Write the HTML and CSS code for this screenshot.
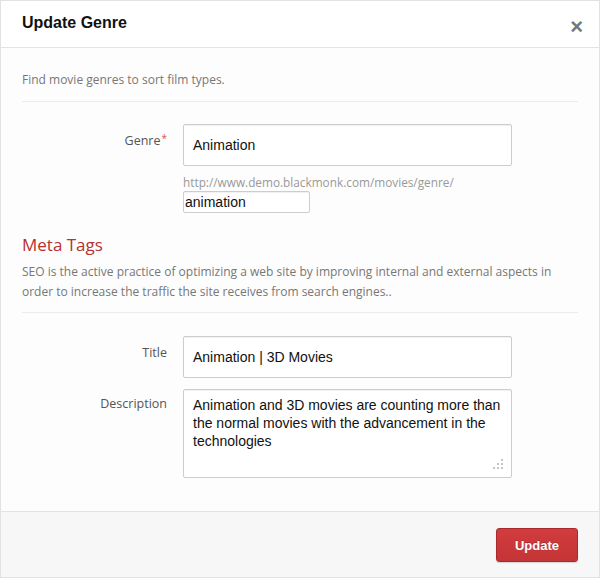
FILE: index.html
```html
<!DOCTYPE html>
<html>
<head>
<meta charset="utf-8">
<link rel="stylesheet" href="styles.css">
</head>
<body>
<div class="modal">
  <div class="modal-header">
    <h3 class="modal-title">Update Genre</h3>
    <span class="close">&times;</span>
  </div>
  <div class="modal-body">
    <p class="intro">Find movie genres to sort film types.</p>
    <hr class="rule">
    <div class="row">
      <label class="label">Genre<span class="req">*</span></label>
      <div class="field">
        <div class="input big">Animation</div>
        <div class="help">http://www.demo.blackmonk.com/movies/genre/</div>
        <div class="input slug">animation</div>
      </div>
    </div>
    <h4 class="section">Meta Tags</h4>
    <p class="seo">SEO is the active practice of optimizing a web site by improving internal and external aspects in order to increase the traffic the site receives from search engines..</p>
    <hr class="rule rule-2">
    <div class="row row-title">
      <label class="label">Title</label>
      <div class="field"><div class="input big">Animation | 3D Movies</div></div>
    </div>
    <div class="row row-desc">
      <label class="label">Description</label>
      <div class="field">
        <div class="input area">Animation and 3D movies are counting more than the normal movies with the advancement in the technologies
          <svg class="grip" width="12" height="12" viewBox="0 0 12 12"><g fill="#c4c4c4"><rect x="9" y="1" width="2" height="2"/><rect x="5" y="5" width="2" height="2"/><rect x="9" y="5" width="2" height="2"/><rect x="1" y="9" width="2" height="2"/><rect x="5" y="9" width="2" height="2"/><rect x="9" y="9" width="2" height="2"/></g></svg>
        </div>
      </div>
    </div>
  </div>
  <div class="modal-footer">
    <button class="btn">Update</button>
  </div>
</div>
</body>
</html>
```
FILE: styles.css
```css
html, body { margin: 0; padding: 0; background: #fff; }
.modal {
  width: 600px; height: 578px; box-sizing: border-box;
  border: 1px solid #e2e2e2;
  display: flex; flex-direction: column;
  font-family: "Open Sans", "Noto Sans", sans-serif;
}
.modal-header {
  height: 46px; border-bottom: 1px solid #e3e3e3;
  display: flex; align-items: center; justify-content: space-between;
  padding: 0 16px 0 21px; background: #fff;
}
.modal-title {
  margin: 0; font-family: "Liberation Sans", Arial, sans-serif;
  font-weight: bold; font-size: 16px; color: #111; position: relative; top: -1px;
}
.close {
  font-family: "Liberation Sans", Arial, sans-serif; font-weight: bold;
  font-size: 22px; color: #777; line-height: 1; position: relative; top: 3px;
}
.modal-body {
  flex: 1; background: #fdfdfd; padding: 23px 21px 0 21px;
}
.intro { margin: 0; font-size: 12px; color: #777; line-height: 18px; }
.rule { border: 0; border-top: 1px solid #ececec; margin: 12px 0 0 0; }
.rule-2 { margin-top: 10px; }
.row { display: grid; grid-template-columns: 145px 329px; column-gap: 16px; }
.row:first-of-type { margin-top: 22px; }
.label { text-align: right; font-size: 12.5px; color: #555; padding-top: 8px; }
.req { color: #d9534f; position: relative; top: -3px; font-size: 10px; margin-left: 1px; }
.field { display: flex; flex-direction: column; align-items: flex-start; }
.input {
  box-sizing: border-box; border: 1px solid #cdcdcd; border-radius: 2px;
  background: #fff; box-shadow: inset 0 1px 1px rgba(0,0,0,0.06);
  font-family: "Liberation Sans", Arial, sans-serif; font-size: 14px; color: #111;
}
.big { width: 329px; height: 42px; line-height: 40px; padding: 0 9px; }
.help { font-size: 11.8px; color: #999; margin-top: 9px; line-height: 14px; }
.slug { width: 127px; height: 22px; line-height: 20px; padding: 0 1px; margin-top: 2px; }
.section { margin: 21px 0 0 0; font-weight: normal; font-size: 17px; color: #b8302f; line-height: 22px; }
.seo { margin: 6px 0 0 0; font-size: 12px; color: #777; line-height: 20px; }
.row-title { margin-top: 23px; }
.row-desc { margin-top: 11px; }
.row-desc .label { padding-top: 6px; }
.area { width: 329px; height: 89px; line-height: 18px; padding: 6px 9px; position: relative; }
.grip { position: absolute; right: 7px; bottom: 7px; }
.modal-footer {
  height: 65px; background: #f7f7f7; border-top: 1px solid #e3e3e3;
  display: flex; align-items: center; justify-content: flex-end; padding: 0 21px;
}
.btn {
  width: 82px; height: 34px; border: 1px solid #a82a2c; border-radius: 3px;
  background: linear-gradient(#d23c3e, #c43436); color: #fff;
  font-family: "Liberation Sans", Arial, sans-serif; font-weight: bold; font-size: 13px;
  box-shadow: 0 1px 1px rgba(0,0,0,0.15);
  text-shadow: 0 -1px 0 rgba(0,0,0,0.2);
  margin-top: 1px;
}
```
